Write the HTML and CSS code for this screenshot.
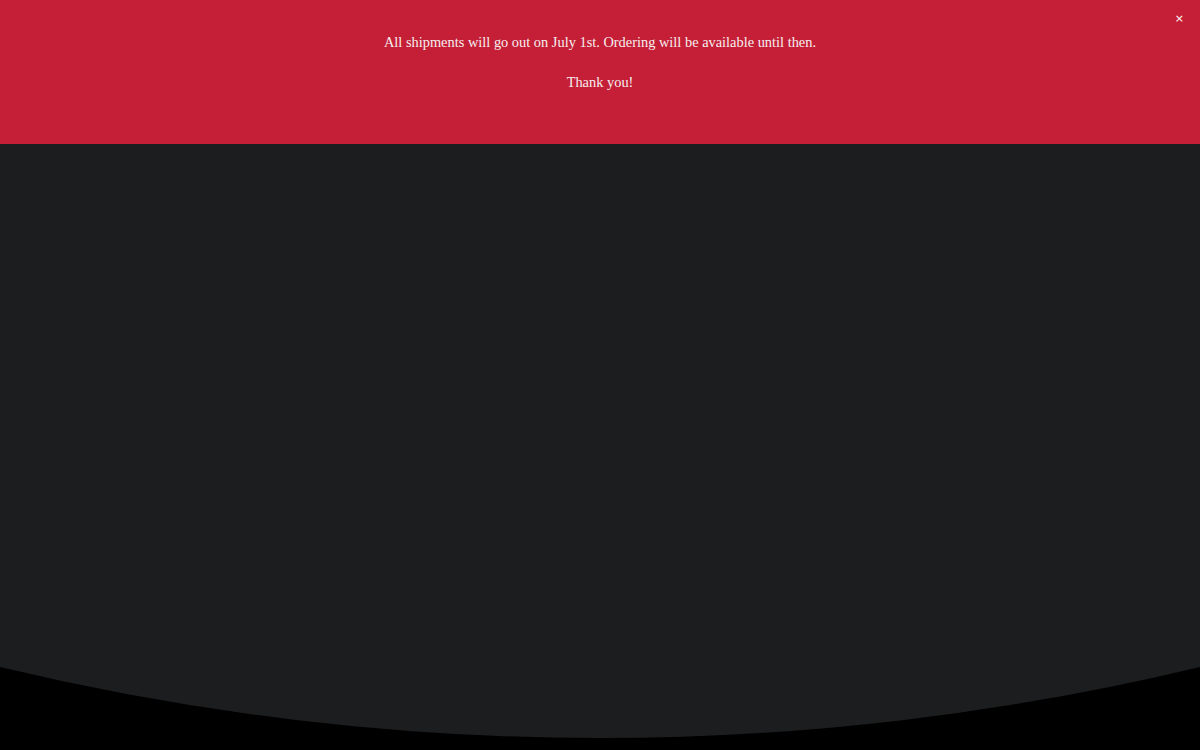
FILE: index.html
```html
<!DOCTYPE html>
<html>
<head>
<meta charset="utf-8">
<link rel="stylesheet" href="styles.css">
</head>
<body>
<div class="banner">
  <p class="banner-text">All shipments will go out on July 1st. Ordering will be available until then.<br><br>Thank you!</p>
  <button class="close" aria-label="Close">&times;</button>
</div>
<section class="hero"></section>
<svg class="curve" viewBox="0 0 1200 83" preserveAspectRatio="none" width="1200" height="83">
  <path d="M0 0 A2571 2571 0 0 0 1200 0 Z" fill="#1c1d1e"/>
</svg>
</body>
</html>
```
FILE: styles.css
```css
html, body {
  margin: 0;
  padding: 0;
  background: #000;
  overflow: hidden;
}
body {
  width: 1200px;
  height: 750px;
  font-family: "Liberation Serif", "Times New Roman", serif;
}
.banner {
  position: relative;
  height: 144px;
  background: #c41f36;
  box-sizing: border-box;
  padding-top: 32px;
}
.banner-text {
  margin: 0;
  text-align: center;
  color: #f7eef0;
  font-size: 14.4px;
  line-height: 20px;
}
.close {
  position: absolute;
  top: 12px;
  right: 16px;
  background: none;
  border: none;
  color: #fff;
  font-size: 11px;
  line-height: 14px;
  padding: 0;
  cursor: pointer;
  font-family: "DejaVu Sans", sans-serif;
}
.hero {
  height: 523px;
  background: #1c1d1e;
}
.curve {
  display: block;
}
```
